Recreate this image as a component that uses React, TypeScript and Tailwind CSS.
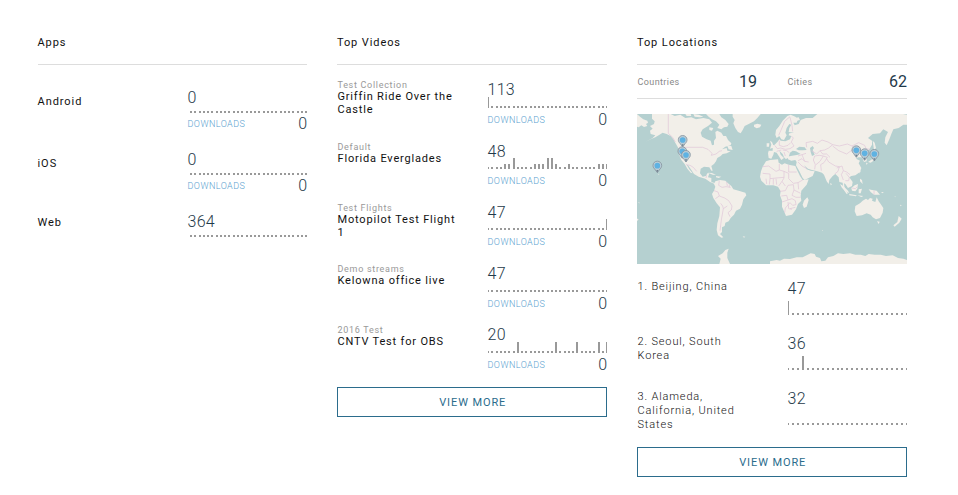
import React from "react";

type SparkProps = {
  count: number;
  height: number;
  levels?: Record<number, number>;
  offset?: number;
  step: number;
  width: number;
};

function Sparkline({ count, height, levels = {}, offset = 0, step, width }: SparkProps) {
  return (
    <svg width={width} height={height} className="block shrink-0" shapeRendering="crispEdges">
      {Array.from({ length: count }, (_, i) => {
        const h = levels[i] ?? 2;
        return (
          <rect key={i} x={Math.round(offset + i * step) - 1} y={height - h} width={2} height={h} fill="#999" />
        );
      })}
    </svg>
  );
}

function Downloads() {
  return (
    <div className="flex h-4 items-center justify-between">
      <span className="pl-[0.5px] text-[9px] font-light leading-4 tracking-[0.45px] text-[#5b9fcf]">DOWNLOADS</span>
      <span className="text-[16px] font-light leading-4 text-[#1f3a4a]">0</span>
    </div>
  );
}

function Heading({ children }: { children: React.ReactNode }) {
  return (
    <h2 className="h-[65px] border-b border-[#ddd] pt-[35px] text-[11px] leading-4 tracking-[0.9px] text-[#111]">
      {children}
    </h2>
  );
}

function ViewMore() {
  return (
    <button className="block h-[30px] w-full border border-[#2b6c8c] bg-white pl-[1.5px] pt-px text-[11px] leading-[28px] tracking-[0.9px] text-[#2b6c8c]">
      VIEW MORE
    </button>
  );
}

const apps = [
  { name: "Android", total: "0", downloads: true, pad: "pt-[7px]" },
  { name: "iOS", total: "0", downloads: true, pad: "pt-[7px]" },
  { name: "Web", total: "364", downloads: false, pad: "pt-[4px]" },
];

const everglades: Record<number, number> = {
  4: 5, 5: 5, 6: 11, 11: 5, 12: 5, 13: 5, 14: 11, 15: 11, 16: 5, 19: 5, 26: 5, 27: 5, 28: 5,
};

const videos = [
  { group: "Test Collection", name: "Griffin Ride Over the Castle", total: "113", levels: { 0: 11 }, h: "h-[62px]", gap: "pt-px" },
  { group: "Default", name: "Florida Everglades", total: "48", levels: everglades, h: "h-[61px]", gap: "pt-0" },
  { group: "Test Flights", name: "Motopilot Test Flight 1", total: "47", levels: { 28: 11 }, h: "h-[61px]", gap: "pt-0" },
  { group: "Demo streams", name: "Kelowna office live", total: "47", levels: {}, h: "h-[61px]", gap: "pt-px" },
  { group: "2016 Test", name: "CNTV Test for OBS", total: "20", levels: { 7: 11, 16: 11, 21: 11, 26: 11, 28: 11 }, h: "h-[63px]", gap: "pt-px" },
];

const places = [
  { name: "1. Beijing, China", total: "47", levels: { 0: 14 } },
  { name: "2. Seoul, South Korea", total: "36", levels: { 3: 14 } },
  { name: "3. Alameda, California, United States", total: "32", levels: {} },
];

const pins = [
  [137, 92], [136, 126], [147, 137], [61, 169], [658, 123], [683, 132], [712, 134],
];

function WorldMap() {
  return (
    <svg width="270" height="150" viewBox="0 0 810 450" className="block bg-[#b5d0d0]">
      <g transform="translate(-15 -12)" fill="#f2efe9">
        <path d="M15 12L24 20L34 28L46 32L48 38L42 42L46 48L36 51L28 46L20 52L15 50Z" />
        <path d="M60 12L116 12L128 18L145 14L160 24L178 22L192 28L214 24L232 28L240 38L228 48L212 58L206 68L210 80L224 88L236 92L240 106L246 104L246 92L252 84L250 66L256 62L268 68L274 78L282 78L288 90L298 100L296 106L280 110L270 118L284 114L286 122L296 124L284 130L272 132L266 138L256 144L252 154L246 162L238 168L242 182L238 182L232 172L216 170L206 176L204 190L212 200L222 198L226 190L232 190L228 202L238 204L238 216L250 220L248 222L234 216L220 206L200 200L186 192L178 180L168 166L164 164L172 178L182 190L176 188L166 176L158 162L148 150L142 136L141 118L132 102L124 88L116 78L104 72L92 68L80 76L70 82L56 88L40 96L62 84L70 76L56 72L54 62L62 56L54 48L66 42L68 34L60 26Z" />
        <path d="M184 12L200 14L214 20L204 22L188 20ZM160 12L176 12L178 18L164 18ZM222 12L262 12L268 22L280 30L290 42L286 50L276 52L268 58L256 54L262 44L252 34L240 28L230 20ZM232 52L244 54L240 62L232 60ZM286 108L298 108L302 120L290 118Z" />
        <path d="M302 12L386 12L376 24L366 34L350 42L338 48L332 60L326 70L318 66L310 54L304 40L308 30L302 20ZM366 44L376 41L388 44L384 52L374 55L366 50Z" />
        <path d="M228 188L240 189L252 195L242 194ZM252 198L268 200L260 204L252 202Z" />
        <path d="M250 214L264 210L280 212L288 220L298 228L304 238L320 242L340 248L343 256L334 268L330 284L324 296L312 302L306 314L296 324L290 334L280 338L278 348L270 352L270 366L264 372L274 382L268 383L258 376L254 360L256 340L262 318L264 292L254 280L244 264L240 252L246 242L250 230L246 222Z" />
        <path d="M262 462L266 446L258 438L272 430L280 420L290 416L286 428L286 444L294 462ZM15 326L20 327L15 334ZM332 379l8 1l-4 3zM79 191l3 2l-2 2zM18 276l6 3l-3 1z" />
      </g>
      <g transform="translate(399 -12)" fill="#f2efe9">
        <path d="M-4 144L-6 130L-4 122L8 122L8 114L2 108L14 104L24 94L28 88L32 92L46 94L60 88L64 78L56 76L58 70L72 68L56 66L58 54L64 44L58 42L50 54L46 68L50 76L42 90L34 88L28 78L20 84L16 74L18 60L28 48L38 32L52 18L62 14L76 20L84 28L80 38L70 38L74 46L86 42L92 30L108 24L128 24L142 12L399 12L411 14L411 44L400 44L386 54L370 58L364 72L358 88L350 106L344 98L346 82L354 66L340 58L330 70L308 72L294 84L306 92L306 104L298 118L286 128L280 134L290 144L290 154L282 156L276 142L264 142L258 146L270 152L266 160L274 174L270 186L256 196L244 198L238 202L248 216L246 228L234 234L226 222L222 220L224 236L234 250L230 252L220 238L218 218L208 216L206 202L196 192L188 198L178 210L176 222L170 214L162 194L156 188L142 184L126 180L114 176L102 166L110 178L122 182L134 184L128 198L104 210L98 204L88 184L78 166L80 156L76 150L64 152L54 148L52 140L62 138L84 134L92 132L78 124L68 122L60 128L56 140L48 148L42 142L38 132L28 122L32 134L42 144L34 150L20 128L12 126L10 134L4 146Z" />
        <path d="M-22 170L-12 154L0 150L24 148L26 158L36 164L44 160L56 164L76 168L80 178L90 198L98 210L116 208L110 224L94 242L92 258L94 272L84 282L78 298L66 314L48 318L44 308L36 290L36 272L30 256L32 244L24 230L10 226L-12 226L-26 212L-30 200L-27 184ZM112 262L116 270L110 290L102 294L98 284L102 272Z" />
        <path d="M0 92L6 96L10 106L14 112L0 116L4 104ZM-10 100L-2 100L-3 110L-10 110ZM308 92L314 98L318 114L312 120ZM310 124L320 128L312 134ZM312 138L314 150L302 158L294 156L306 148ZM288 158l5 1l-3 6zM268 182l4 0l-3 9zM181 218l5 5l-4 3z" />
        <path d="M210 222L220 228L234 242L238 250L228 244L216 234ZM238 252L260 256L258 259L238 256ZM244 234L254 226L264 222L262 236L256 244L246 242ZM266 238L276 236L272 250L266 250ZM270 206L276 210L278 222L270 214ZM296 238L306 240L320 242L330 254L322 254L312 254L302 246ZM262 256l18 2l-6 3zM334 246l8 0l-6 4z" />
        <path d="M256 288L270 280L278 272L288 266L294 270L300 264L308 266L306 272L316 276L320 262L326 274L332 282L340 294L338 308L330 324L318 328L308 322L302 314L290 310L276 316L260 318L254 304ZM321 334L329 335L326 342ZM386 318L395 326L388 338L374 350L370 346L382 336Z" />
        <path d="M0 462L0 454L20 450L30 452L42 446L60 447L80 442L98 442L110 436L122 430L134 432L138 440L150 444L154 454L166 452L174 442L190 438L204 430L220 432L240 430L256 434L272 434L286 438L296 432L314 434L332 434L348 438L368 436L384 444L400 446L411 450L411 462Z" />
        <path d="M78 117L88 110L104 112L110 120L98 121L86 121ZM120 114L128 108L132 114L128 120L134 134L126 138L122 126Z" fill="#b5d0d0" />
        <path d="M-12 18l3 2zM156 360l3 1l-2 2zM374 258l3 2l-2 2zM390 284l5 2l-3 3zM74 24l12-2l4 8l-10 2z" />
      </g>
      <g transform="translate(-15 -12)" fill="none" stroke="#dfc4d8" strokeWidth="2">
        <path d="M109 12V70L122 82L130 96M141 112H212L228 118L240 130L238 136L252 132L262 124L270 122M162 164L174 166L184 172L194 184M222 204L224 196M262 212L260 226L270 232L282 230L296 232M246 242L258 246L262 258L250 266M262 258L278 264L290 272L300 288L298 300L288 308L294 320M266 280L272 288L274 296L268 330L264 362M274 296L286 288M284 216L286 228M292 224L292 232" />
      </g>
      <g transform="translate(399 -12)" fill="none" stroke="#dfc4d8" strokeWidth="2">
        <path d="M26 76L34 58L44 34L60 20M60 22L66 46L68 64M64 78L70 84L64 96L72 108L60 116M28 92V106L40 110L54 106L62 98M14 106L22 116L32 114L46 118L60 116M20 124L34 120M38 120L50 122L58 128M42 126L46 138M110 112L108 98L128 94L142 100L156 90L174 96L188 104L176 114L164 120L150 122L140 132L124 122M188 104L208 108L232 102L246 108L254 114L230 132L206 122L188 108M246 108L266 98L284 106L288 116L300 118M84 138L96 134L100 144L104 154L116 156M96 134L108 130M84 152L96 146L104 154M84 156L96 168L110 176M134 138L130 150L136 164L134 178M134 138L148 136L160 138L150 154L138 164M160 138L172 142L162 158L152 164L154 182M150 122L158 132L170 132L180 142M170 146L176 156L196 168L208 170L204 184L194 192M200 174L216 168L220 182L230 186L240 194M220 182L214 194L220 210M228 190L238 202L236 212L226 212" />
        <path d="M-22 170L-4 168L18 184L28 180L28 162M28 180L42 184V204L36 214L46 228M56 164V186H80M42 184L56 190V206L70 220L84 218L98 210M-22 190L0 192V206L18 204L42 202M0 206L-2 224M10 206V224M18 206L20 224M-12 206L-10 222M26 228L36 214M30 244L46 242L54 226L70 224L72 240L92 250M72 240L66 256L78 262L92 262M34 258L50 256L54 270L36 276M54 270L66 266L76 272L78 284L68 286L60 278L46 294M54 276L56 296L66 298M46 294L44 308M84 218L86 238M60 296L76 292M246 234L256 236L262 230M312 242V254" />
      </g>
      {pins.map(([x, y]) => (
        <g key={`${x}-${y}`} transform={`translate(${x} ${y})`}>
          <path d="M0 7L-8 -4C-12 -8 -13 -11 -13 -15A13 12.5 0 0 1 13 -15C13 -11 12 -8 8 -4Z" fill="#bccdd6" stroke="#8594a0" strokeWidth="2.5" />
          <circle cx="0" cy="-14" r="8.5" fill="#5fb2e2" />
          <path d="M-3 -1L0 7L3 -1Z" fill="#70808c" />
        </g>
      ))}
    </svg>
  );
}

export default function App() {
  return (
    <main className="grid h-[495px] w-[958px] grid-cols-[269px_270px_270px] items-start gap-[30px] overflow-hidden bg-white pl-[38px] font-['Roboto',sans-serif]">
      <section>
        <div className="-ml-[0.5px]">
          <Heading>Apps</Heading>
        </div>
        <div className="pt-[22px]">
          {apps.map((a) => (
            <div key={a.name} className="flex h-[62px] justify-between">
              <p className={`-ml-[0.5px] text-[11px] leading-4 tracking-[0.95px] text-[#111] ${a.pad}`}>{a.name}</p>
              <div className="w-[120px]">
                <p className="h-5 pl-[0.5px] pt-px text-[16px] font-light leading-5 tracking-[0.3px] text-[#1f3a4a]">{a.total}</p>
                <div className="pt-1">
                  <Sparkline count={28} height={2} step={4.27} offset={4} width={120} />
                </div>
                {a.downloads && <div className="pt-[3px]"><Downloads /></div>}
              </div>
            </div>
          ))}
        </div>
      </section>

      <section>
        <Heading>Top Videos</Heading>
        <div className="pt-[14px]">
          {videos.map((v) => (
            <div key={v.group} className={`flex justify-between ${v.h}`}>
              <div className="w-[125px] pl-[0.5px]">
                <p className="h-[11px] text-[9px] leading-3 tracking-[0.7px] text-[#999]">{v.group}</p>
                <p className="text-[11px] leading-[13px] tracking-[0.82px] text-[#111]">{v.name}</p>
              </div>
              <div className="w-[120px]">
                <p className="h-[17px] pl-[0.5px] pt-px text-[16px] font-light leading-5 tracking-[0.3px] text-[#1f3a4a]">{v.total}</p>
                <div className={`pl-px ${v.gap}`}>
                  <Sparkline count={29} height={11} levels={v.levels} step={4.25} width={119} />
                </div>
                <div className="pt-1"><Downloads /></div>
              </div>
            </div>
          ))}
        </div>
        <ViewMore />
      </section>

      <section>
        <Heading>Top Locations</Heading>
        <div className="grid h-[34px] grid-cols-2 gap-[30px] border-b border-[#ddd]">
          {[["Countries", "19"], ["Cities", "62"]].map(([k, n]) => (
            <div key={k} className="flex items-center justify-between">
              <span className="pl-[0.5px] text-[9px] leading-4 tracking-[0.4px] text-[#888]">{k}</span>
              <span className="text-[16px] leading-5 text-[#1f3a4a]">{n}</span>
            </div>
          ))}
        </div>
        <div className="pt-[15px]">
          <WorldMap />
        </div>
        <div className="pt-[14px]">
          {places.map((p) => (
            <div key={p.name} className="flex h-[55px] justify-between">
              <p className="w-[112px] pl-[0.5px] pt-[2px] text-[11px] font-light leading-[14px] tracking-[0.85px] text-[#111]">{p.name}</p>
              <div className="w-[120px]">
                <p className="h-[23px] pl-[0.5px] text-[16px] font-light leading-[21px] tracking-[0.3px] text-[#1f3a4a]">{p.total}</p>
                <div className="pl-px">
                  <Sparkline count={25} height={14} levels={p.levels} step={4.95} width={119} />
                </div>
              </div>
            </div>
          ))}
        </div>
        <div className="pt-1">
          <ViewMore />
        </div>
      </section>
    </main>
  );
}
